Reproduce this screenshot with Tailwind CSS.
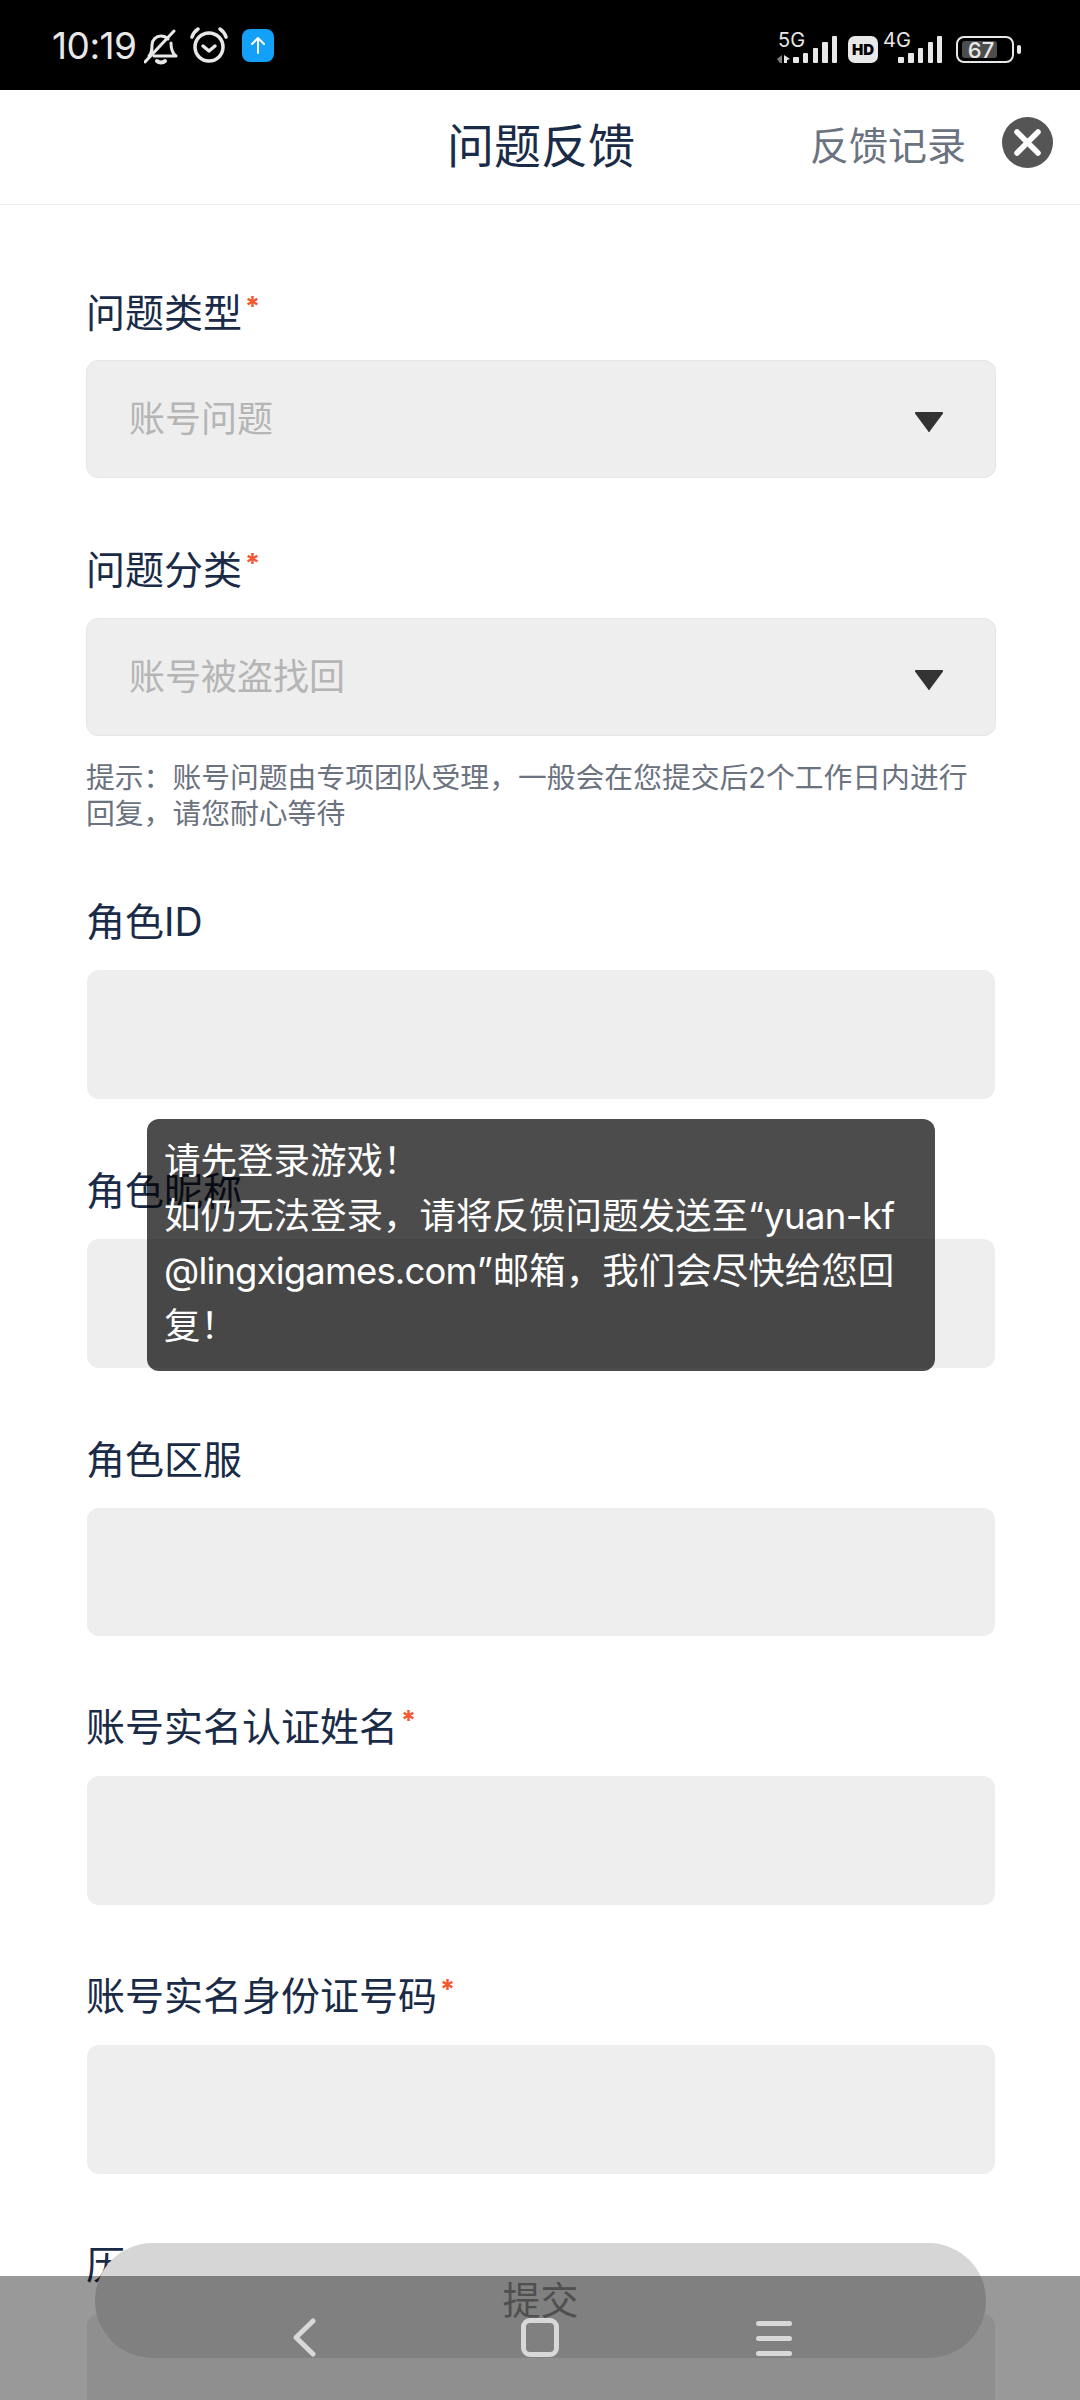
<!DOCTYPE html>
<html lang="zh-CN">
<head>
    <meta charset="UTF-8">
    <meta name="viewport" content="width=device-width, initial-scale=1.0">
    <title>问题反馈</title>
    <script src="https://cdn.jsdelivr.net/npm/@tailwindcss/browser@4"></script>
</head>
<body class="font-['Inter','Noto_Sans_CJK_SC',sans-serif] bg-white">
    <div class="relative w-[1080px] h-[2400px] overflow-hidden bg-white">

        <!-- status bar -->
        <div class="h-[90px] bg-black flex items-center justify-between pl-[52px] pr-[59px] text-[#e8e8e8]">
            <div class="flex items-center">
                <span class="text-[37px] leading-none tracking-[-0.5px]">10:19</span>
                <svg class="ml-[7px] w-[34px] h-[36px] mt-[3px]" viewBox="0 0 34 36" fill="none" stroke="#e8e8e8" stroke-width="3" stroke-linecap="round" stroke-linejoin="round">
                    <path d="M5 27c3-3 3-6 3-11 0-5 4-9 9-9 3 0 5 1 7 3"/>
                    <path d="M27 14c0 6 1 10 5 13H10"/>
                    <path d="M1 33 30 2"/>
                    <path d="M13 32c2 2 6 2 8 0" stroke-width="4"/>
                </svg>
                <svg class="ml-[12px] w-[38px] h-[36px]" viewBox="0 0 38 36" fill="none" stroke="#e8e8e8" stroke-width="3.500" stroke-linecap="round" stroke-linejoin="round">
                    <circle cx="19" cy="20" r="14"/>
                    <path d="M13 19l6 5 6-5"/>
                    <path d="M2 10c1-3 3-6 6-8M36 10c-1-3-3-6-6-8"/>
                </svg>
                <div class="ml-[14px] w-[32px] h-[33px] rounded-[8px] bg-[#12a0f8] flex items-center justify-center">
                    <svg class="w-[16px] h-[18px]" viewBox="0 0 16 18" fill="none" stroke="#fff" stroke-width="2" stroke-linecap="round" stroke-linejoin="round">
                        <path d="M8 17V2M2 8l6-6 6 6"/>
                    </svg>
                </div>
            </div>
            <div class="flex items-start h-[34px] mt-[4px]">
                <div class="relative w-[62px] h-[34px]">
                    <span class="absolute left-[2px] top-0 text-[20px] leading-[20px]">5G</span>
                    <svg class="absolute left-0 top-0 w-[62px] h-[34px]" viewBox="0 0 62 34" fill="#e8e8e8">
                        <path d="M6 25v8H4L1 29z" opacity=".55"/>
                        <path d="M8 25l6 4-3 1v3H8z"/>
                        <rect x="17" y="27" width="6" height="6" rx="1"/>
                        <rect x="27" y="23" width="5" height="10" rx="1"/>
                        <rect x="37" y="18" width="5" height="15" rx="1"/>
                        <rect x="46" y="12" width="6" height="21" rx="1"/>
                        <rect x="56" y="6" width="5" height="27" rx="1"/>
                    </svg>
                </div>
                <div class="ml-[10px] mt-[6px] w-[30px] h-[27px] rounded-[7px] bg-[#e8e8e8] flex items-center justify-center text-black text-[15px] font-black leading-none">HD</div>
                <div class="relative ml-[5px] w-[60px] h-[34px]">
                    <span class="absolute left-0 top-0 text-[20px] leading-[20px]">4G</span>
                    <svg class="absolute left-0 top-0 w-[60px] h-[34px]" viewBox="0 0 60 34" fill="#e8e8e8">
                        <rect x="15" y="27" width="6" height="6" rx="1"/>
                        <rect x="25" y="23" width="6" height="10" rx="1"/>
                        <rect x="35" y="18" width="5" height="15" rx="1"/>
                        <rect x="45" y="12" width="5" height="21" rx="1"/>
                        <rect x="54" y="6" width="5" height="27" rx="1"/>
                    </svg>
                </div>
                <div class="ml-[13px] mt-[6px] relative w-[58px] h-[27px] rounded-[8px] border-[2px] border-[#e8e8e8]">
                    <div class="absolute left-[4px] top-[3px] bottom-[3px] w-[35px] rounded-[3px] bg-[#4d4d4d]"></div>
                    <span class="absolute inset-0 flex items-center justify-center pr-[8px] text-[22px] font-medium leading-none">67</span>
                </div>
                <div class="ml-[3px] mt-[15px] w-[4px] h-[9px] rounded-[2px] bg-[#e8e8e8]"></div>
            </div>
        </div>

        <!-- header -->
        <div class="relative h-[115px] border-b border-[#eeeeee] flex items-center justify-center">
            <h1 class="text-[47px] leading-none font-normal text-[#1a2b47] mt-[-4px] ml-[2px]">问题反馈</h1>
            <div class="absolute right-[27px] top-[27px] flex items-center">
                <span class="text-[39px] leading-none text-[#6b7280] mt-[6px]">反馈记录</span>
                <button class="ml-[36px] w-[51px] h-[51px] rounded-full bg-[#555555] flex items-center justify-center">
                    <svg class="w-[29px] h-[29px]" viewBox="0 0 29 29" fill="none" stroke="#fff" stroke-width="5.500" stroke-linecap="round">
                        <path d="M4 4l21 21M25 4 4 25"/>
                    </svg>
                </button>
            </div>
        </div>

        <!-- form -->
        <div class="pl-[86px] pr-[84px] pt-[83px]">
            <div class="text-[39px] leading-[50px] text-[#1a2b47]">问题类型<span class="ml-[3px] text-[27px] font-bold leading-[38px] align-top text-[#f4572d]">*</span></div>
            <div class="mt-[22px] h-[118px] rounded-[12px] bg-[#eeeeee] border border-[#e6e6e6] flex items-center justify-between pl-[42px] pr-[52px]">
                <span class="text-[36px] leading-none text-[#b5b5b5]">账号问题</span>
                <svg class="w-[28px] h-[20px] mt-[5px]" viewBox="0 0 28 20" fill="#333333"><path d="M1 0h26a1 1 0 0 1 1 1.500L15 19a1 1 0 0 1-2 0L0 1.500A1 1 0 0 1 1 0z"/></svg>
            </div>

            <div class="mt-[67px] text-[39px] leading-[50px] text-[#1a2b47]">问题分类<span class="ml-[3px] text-[27px] font-bold leading-[38px] align-top text-[#f4572d]">*</span></div>
            <div class="mt-[23px] h-[118px] rounded-[12px] bg-[#eeeeee] border border-[#e6e6e6] flex items-center justify-between pl-[42px] pr-[52px]">
                <span class="text-[36px] leading-none text-[#b5b5b5]">账号被盗找回</span>
                <svg class="w-[28px] h-[20px] mt-[5px]" viewBox="0 0 28 20" fill="#333333"><path d="M1 0h26a1 1 0 0 1 1 1.500L15 19a1 1 0 0 1-2 0L0 1.500A1 1 0 0 1 1 0z"/></svg>
            </div>
            <p class="mt-[24px] text-[28.800px] leading-[36px] text-[#6b7280]">提示：账号问题由专项团队受理，一般会在您提交后2个工作日内进行回复，请您耐心等待</p>

            <div class="mt-[65px] text-[39px] leading-[50px] text-[#1a2b47]">角色ID</div>
            <div class="mt-[23px] mx-[1px] h-[128.750px] rounded-[12px] bg-[#eeeeee]"></div>

            <div class="mt-[67px] text-[39px] leading-[50px] text-[#1a2b47]">角色昵称</div>
            <div class="mt-[23px] mx-[1px] h-[128.750px] rounded-[12px] bg-[#eeeeee]"></div>

            <div class="mt-[67px] text-[39px] leading-[50px] text-[#1a2b47]">角色区服</div>
            <div class="mt-[23px] mx-[1px] h-[128.750px] rounded-[12px] bg-[#eeeeee]"></div>

            <div class="mt-[66px] text-[39px] leading-[50px] text-[#1a2b47]">账号实名认证姓名<span class="ml-[3px] text-[27px] font-bold leading-[38px] align-top text-[#f4572d]">*</span></div>
            <div class="mt-[24px] mx-[1px] h-[128.750px] rounded-[12px] bg-[#eeeeee]"></div>

            <div class="mt-[66px] text-[39px] leading-[50px] text-[#1a2b47]">账号实名身份证号码<span class="ml-[3px] text-[27px] font-bold leading-[38px] align-top text-[#f4572d]">*</span></div>
            <div class="mt-[24px] mx-[1px] h-[128.750px] rounded-[12px] bg-[#eeeeee]"></div>

            <div class="mt-[66px] text-[39px] leading-[50px] text-[#1a2b47]">历史充值金额</div>
            <div class="mt-[24px] mx-[1px] h-[128.750px] rounded-[12px] bg-[#eeeeee]"></div>
        </div>

        <!-- toast -->
        <div class="absolute left-[147px] top-[1119px] w-[788px] h-[252px] rounded-[12px] bg-black/70 px-[17px] pt-[15px] text-[36.500px] leading-[55px] text-white">请先登录游戏！<br>如仍无法登录，请将反馈问题发送至“<span class="tracking-[-0.600px]">yuan-kf</span><br><span class="tracking-[-0.850px]">@lingxigames.com</span>”邮箱，我们会尽快给您回<br>复！</div>

        <!-- submit -->
        <button class="absolute left-[95px] top-[2243px] w-[891px] h-[115px] rounded-full bg-[#d6d6d6] text-[38px] leading-none text-[#848484] pb-[2px]">提交</button>

        <!-- nav bar -->
        <div class="absolute left-0 right-0 bottom-0 h-[124px] bg-black/40 flex items-start justify-center pl-[4px] pt-[42px]">
            <svg class="w-[24px] h-[39px]" viewBox="0 0 24 39" fill="none" stroke="#d8d8d8" stroke-width="5" stroke-linecap="round" stroke-linejoin="round">
                <path d="M21 3 4 19.500 21 36"/>
            </svg>
            <div class="ml-[205px] w-[38px] h-[39px] rounded-[9px] border-[5px] border-[#d8d8d8]"></div>
            <div class="ml-[197px] w-[36px] pt-[3px] flex flex-col gap-[10px]">
                <div class="h-[5px] rounded-full bg-[#d8d8d8]"></div>
                <div class="h-[5px] rounded-full bg-[#d8d8d8]"></div>
                <div class="h-[5px] rounded-full bg-[#d8d8d8]"></div>
            </div>
        </div>
    </div>
</body>
</html>
